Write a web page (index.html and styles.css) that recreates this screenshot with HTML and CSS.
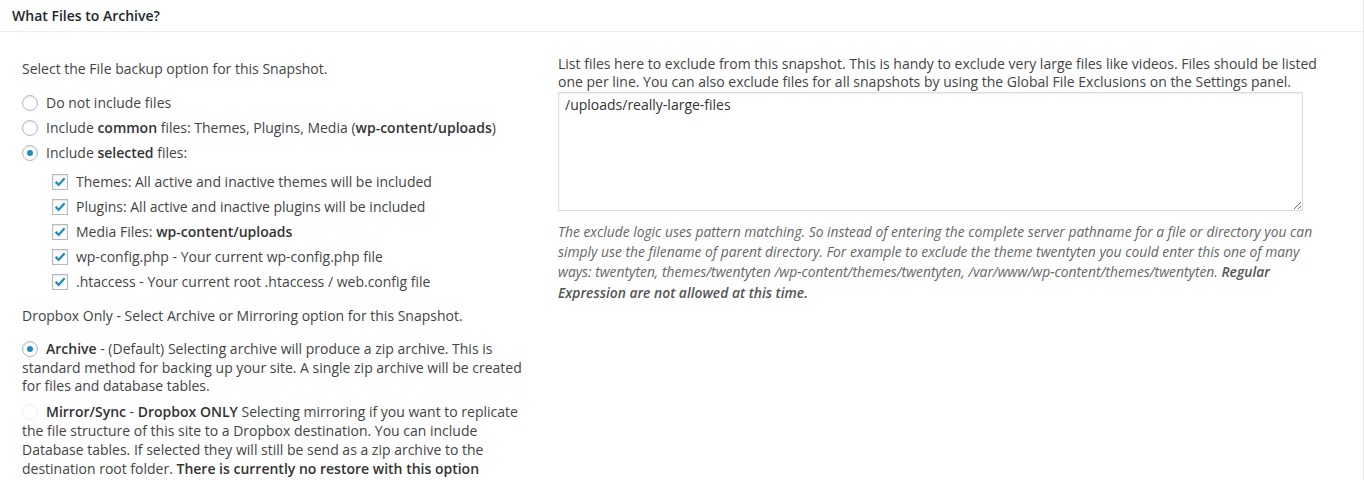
FILE: index.html
```html
<!DOCTYPE html>
<html>
<head>
<meta charset="utf-8">
<link rel="stylesheet" href="styles.css">
</head>
<body>
<div class="panel">
  <h3 class="header">What Files to Archive?</h3>
  <div class="content">
    <div class="col-left">
      <p class="intro">Select the File backup option for this Snapshot.</p>
      <ul class="radios">
        <li><span class="radio"></span>Do not include files</li>
        <li><span class="radio"></span>Include&nbsp;<b>common</b>&nbsp;files: Themes, Plugins, Media (<b>wp-content/uploads</b>)</li>
        <li><span class="radio checked"></span>Include&nbsp;<b>selected</b>&nbsp;files:</li>
      </ul>
      <ul class="checks">
        <li><span class="cb"><svg viewBox="0 0 16 16" width="16" height="16"><path d="M3.6 7.8 L6.6 10.9 L12.6 4.3" fill="none" stroke="#1e8cbe" stroke-width="2.3"/></svg></span>Themes: All active and inactive themes will be included</li>
        <li><span class="cb"><svg viewBox="0 0 16 16" width="16" height="16"><path d="M3.6 7.8 L6.6 10.9 L12.6 4.3" fill="none" stroke="#1e8cbe" stroke-width="2.3"/></svg></span>Plugins: All active and inactive plugins will be included</li>
        <li><span class="cb"><svg viewBox="0 0 16 16" width="16" height="16"><path d="M3.6 7.8 L6.6 10.9 L12.6 4.3" fill="none" stroke="#1e8cbe" stroke-width="2.3"/></svg></span>Media Files:&nbsp;<b>wp-content/uploads</b></li>
        <li><span class="cb"><svg viewBox="0 0 16 16" width="16" height="16"><path d="M3.6 7.8 L6.6 10.9 L12.6 4.3" fill="none" stroke="#1e8cbe" stroke-width="2.3"/></svg></span>wp-config.php - Your current wp-config.php file</li>
        <li><span class="cb"><svg viewBox="0 0 16 16" width="16" height="16"><path d="M3.6 7.8 L6.6 10.9 L12.6 4.3" fill="none" stroke="#1e8cbe" stroke-width="2.3"/></svg></span>.htaccess - Your current root .htaccess / web.config file</li>
      </ul>
      <p class="dropbox">Dropbox Only - Select Archive or Mirroring option for this Snapshot.</p>
      <p class="option archive"><span class="radio checked inline"></span><b>Archive</b> - (Default) Selecting archive will produce a zip archive. This is standard method for backing up your site. A single zip archive will be created for files and database tables.</p>
      <p class="option mirror"><span class="radio disabled inline"></span><b>Mirror/Sync</b> - <b>Dropbox ONLY</b> Selecting mirroring if you want to replicate the file structure of this site to a Dropbox destination. You can include Database tables. If selected they will still be send as a zip archive to the destination root folder. <b>There is currently no restore with this option</b></p>
    </div>
    <div class="col-right">
      <p class="exclude-label">List files here to exclude from this snapshot. This is handy to exclude very large files like videos. Files should be listed one per line. You can also exclude files for all snapshots by using the Global File Exclusions on the Settings panel.</p>
      <textarea class="exclude">/uploads/really-large-files</textarea>
      <p class="desc">The exclude logic uses pattern matching. So instead of entering the complete server pathname for a file or directory you can simply use the filename of parent directory. For example to exclude the theme twentyten you could enter this one of many ways: twentyten, themes/twentyten /wp-content/themes/twentyten, /var/www/wp-content/themes/twentyten. <b>Regular Expression are not allowed at this time.</b></p>
    </div>
  </div>
</div>
</body>
</html>
```
FILE: styles.css
```css
html, body {
  margin: 0;
  padding: 0;
  background: #fff;
}
body {
  font-family: "Open Sans", "Liberation Sans", sans-serif;
  font-size: 14px;
  color: #444;
}
b {
  font-weight: 600;
  color: #333;
}
.panel {
  width: 1363px;
  height: 480px;
  border-right: 1px solid #e5e5e5;
  overflow: hidden;
}
.header {
  margin: 0;
  padding: 6px 12px;
  line-height: 19px;
  font-size: 14px;
  font-weight: 600;
  color: #23282d;
  border-bottom: 1px solid #eee;
}
.content {
  display: grid;
  grid-template-columns: 508px 770px;
  column-gap: 28px;
  padding-left: 22px;
}
.col-left {
  padding-top: 28px;
  line-height: 18.6px;
}
.col-left p {
  margin: 0;
}
ul {
  list-style: none;
  margin: 0;
  padding: 0;
}
.radios {
  margin-top: 12px;
}
.radios li, .checks li {
  display: flex;
  align-items: center;
  height: 25px;
  white-space: nowrap;
}
.checks {
  margin-top: 4px;
  padding-left: 30px;
}
.radio {
  display: inline-block;
  box-sizing: border-box;
  width: 16px;
  height: 16px;
  border: 1px solid #b4b9be;
  border-radius: 50%;
  background: #fff;
  box-shadow: inset 0 1px 2px rgba(0,0,0,0.1);
  margin-right: 8px;
  position: relative;
  flex: none;
}
.radio.checked::before {
  content: "";
  position: absolute;
  left: 4px;
  top: 4px;
  width: 6px;
  height: 6px;
  border-radius: 50%;
  background: #1e8cbe;
}
.radio.disabled {
  border-color: #f0f0f0;
  box-shadow: inset 0 1px 2px rgba(0,0,0,0.03);
}
.radio.inline {
  vertical-align: -3px;
  margin-right: 8px;
}
.cb {
  display: inline-flex;
  box-sizing: border-box;
  width: 16px;
  height: 16px;
  border: 1px solid #b4b9be;
  background: #fff;
  box-shadow: inset 0 1px 2px rgba(0,0,0,0.1);
  margin-right: 8px;
  flex: none;
  align-items: center;
  justify-content: center;
}
.cb svg {
  display: block;
  margin: -1px;
}
.dropbox {
  margin-top: 12px !important;
}
.archive {
  margin-top: 15px !important;
}
.mirror {
  margin-top: 6px !important;
  line-height: 19px;
}
.col-right {
  padding-top: 23px;
}
.exclude-label {
  margin: 0;
  line-height: 18px;
}
.exclude {
  display: block;
  box-sizing: border-box;
  width: 745px;
  height: 119px;
  margin-top: 1px;
  border: 1px solid #ddd;
  box-shadow: inset 0 1px 2px rgba(0,0,0,0.07);
  padding: 3px 6px;
  font-family: "Open Sans", "Liberation Sans", sans-serif;
  font-size: 14px;
  line-height: 18px;
  color: #333;
  resize: vertical;
  outline: none;
}
.desc {
  margin: 11px 0 0;
  font-style: italic;
  font-size: 13.85px;
  line-height: 20.2px;
  color: #666;
}
.desc b {
  color: #555;
}
```
